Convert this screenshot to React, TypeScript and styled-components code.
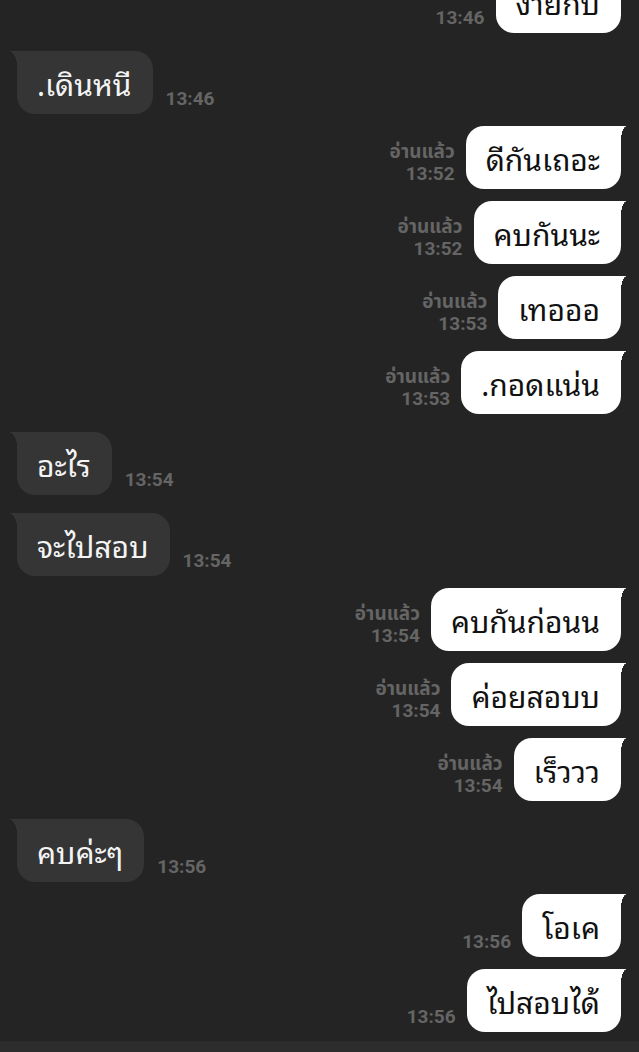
import styled, { createGlobalStyle } from 'styled-components';

type Msg = {
  side: 'me' | 'them';
  text: string;
  time: string;
  read?: boolean;
};

const messages: Msg[] = [
  { side: 'me', text: 'ง่ายกับ', time: '13:46' },
  { side: 'them', text: '.เดินหนี', time: '13:46' },
  { side: 'me', text: 'ดีกันเถอะ', time: '13:52', read: true },
  { side: 'me', text: 'คบกันนะ', time: '13:52', read: true },
  { side: 'me', text: 'เทอออ', time: '13:53', read: true },
  { side: 'me', text: '.กอดแน่น', time: '13:53', read: true },
  { side: 'them', text: 'อะไร', time: '13:54' },
  { side: 'them', text: 'จะไปสอบ', time: '13:54' },
  { side: 'me', text: 'คบกันก่อนน', time: '13:54', read: true },
  { side: 'me', text: 'ค่อยสอบบ', time: '13:54', read: true },
  { side: 'me', text: 'เร็ววว', time: '13:54', read: true },
  { side: 'them', text: 'คบค่ะๆ', time: '13:56' },
  { side: 'me', text: 'โอเค', time: '13:56' },
  { side: 'me', text: 'ไปสอบได้', time: '13:56' },
];

const App = () => {
  return (
    <Screen>
      <GlobalStyle />
      <Thread>
        {messages.map((m, i) => (
          <Row key={i} side={m.side}>
            {m.side === 'me' && (
              <Meta side={m.side}>
                {m.read && <ReadLabel>อ่านแล้ว</ReadLabel>}
                <Time>{m.time}</Time>
              </Meta>
            )}
            <Bubble side={m.side}>{m.text}</Bubble>
            {m.side === 'them' && (
              <Meta side={m.side}>
                <Time>{m.time}</Time>
              </Meta>
            )}
          </Row>
        ))}
      </Thread>
      <BottomBar />
    </Screen>
  );
};

export default App;

const GlobalStyle = createGlobalStyle`
  html, body {
    margin: 0;
    padding: 0;
    background: #242424;
    overflow: hidden;
  }
`;

const Screen = styled.div`
  width: 639px;
  height: 1052px;
  display: flex;
  flex-direction: column;
  background: #242424;
  overflow: hidden;
`;

const Thread = styled.div`
  flex: 1;
  display: flex;
  flex-direction: column;
  padding: 0 18px 0 17px;
  margin-top: -42px;
`;

const Row = styled.div<{ side: 'me' | 'them' }>`
  display: flex;
  align-items: flex-end;
  justify-content: ${({ side }) => (side === 'me' ? 'flex-end' : 'flex-start')};
  gap: ${({ side }) => (side === 'me' ? '11px' : '13px')};
  margin-top: ${({ side }) => (side === 'me' ? '12px' : '18px')};
`;

const Bubble = styled.div<{ side: 'me' | 'them' }>`
  position: relative;
  box-sizing: border-box;
  height: 63px;
  padding: 0 21px 0 20px;
  display: flex;
  align-items: center;
  font-family: 'Noto Sans Thai Looped', 'Noto Sans Thai', 'Noto Sans', sans-serif;
  font-size: 30px;
  white-space: nowrap;
  border-radius: 18px;
  color: ${({ side }) => (side === 'me' ? '#111111' : '#f4f4f4')};
  background: ${({ side }) => (side === 'me' ? '#ffffff' : '#353535')};
  ${({ side }) =>
    side === 'me' ? 'border-top-right-radius: 0;' : 'border-top-left-radius: 0;'};

  &::before {
    content: '';
    position: absolute;
    top: 0;
    height: 14px;
    ${({ side }) =>
      side === 'me'
        ? `right: -6px; width: 6px;
           background: radial-gradient(ellipse 6px 14px at 100% 100%, transparent 98%, #ffffff 100%);`
        : `left: -9px; width: 9px;
           background: radial-gradient(ellipse 9px 14px at 0 100%, transparent 98%, #353535 100%);`};
  }
`;

const Meta = styled.div<{ side: 'me' | 'them' }>`
  display: flex;
  flex-direction: column;
  align-items: ${({ side }) => (side === 'me' ? 'flex-end' : 'flex-start')};
  margin-bottom: 4px;
  font-family: Roboto, 'Noto Sans Thai', 'Noto Sans', sans-serif;
  font-weight: 700;
  color: #656565;
`;

const ReadLabel = styled.span`
  font-size: 19px;
  line-height: 23px;
`;

const Time = styled.span`
  font-size: 19px;
  line-height: 22px;
`;

const BottomBar = styled.div`
  height: 10px;
  flex-shrink: 0;
  background: #2d2d2d;
  border-top: 1px solid #2a2a2a;
`;
